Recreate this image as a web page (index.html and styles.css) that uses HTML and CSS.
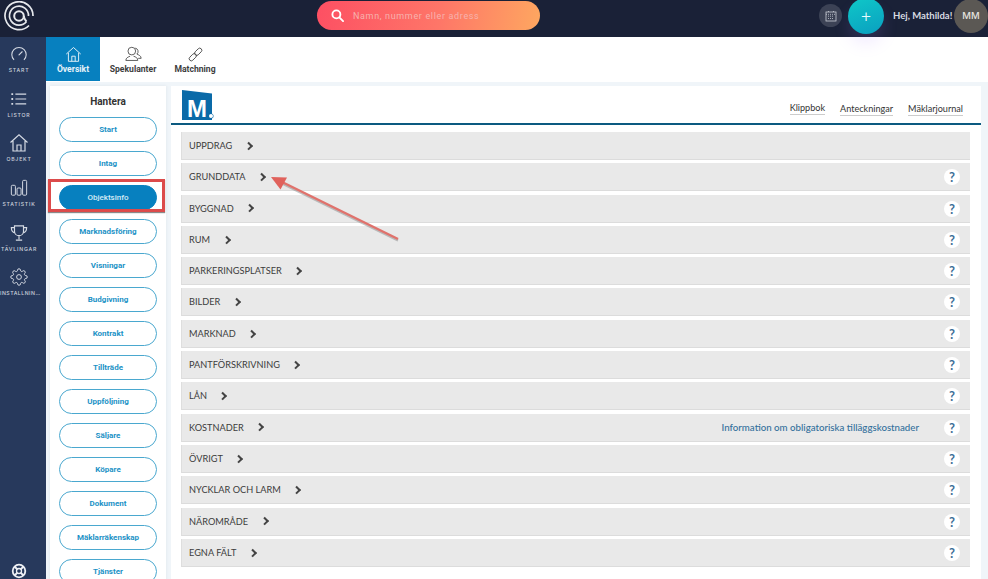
FILE: index.html
```html
<!DOCTYPE html>
<html lang="sv">
<head>
<meta charset="utf-8">
<title>Objekt</title>
<link rel="stylesheet" href="styles.css">
</head>
<body>
<header class="topbar">
  <svg class="logo" viewBox="0 0 30 30" width="30" height="30" fill="none" stroke="#e6e8ec" stroke-width="1.700">
    <path d="M25 24.500A14 14 0 1 1 29 15"/>
    <path d="M22.500 20.500A9.500 9.500 0 1 1 24.500 15"/>
    <circle cx="15" cy="15" r="4.800" stroke-width="2"/>
    <path d="M19.800 15c0 2.500 1 3.500 2.700 5.500" stroke-width="2"/>
  </svg>
  <div class="search">
    <svg class="search-icon" viewBox="0 0 14 14" width="13" height="13" fill="none" stroke="#fff" stroke-width="2"><circle cx="5.800" cy="5.800" r="4.300"/><path d="M9 9l4 4" stroke-linecap="round"/></svg>
    <span class="search-text">Namn, nummer eller adress</span>
  </div>
  <div class="top-right">
    <span class="cal">
      <svg viewBox="0 0 12 12" width="12" height="12" fill="none" stroke="#c8ccd4" stroke-width=".8"><rect x="1" y="2" width="10" height="9"/><path d="M1 4.300h10M3.500 1v2M8.500 1v2M3 6.200h6M3 8.500h6" stroke-dasharray="1 1"/></svg>
    </span>
    <span class="plus">+</span>
    <span class="greet">Hej, Mathilda!</span>
    <span class="avatar">MM</span>
  </div>
</header>

<div class="shell">
  <nav class="side">
    <a class="side-item">
      <svg viewBox="0 0 20 20" width="18" height="18" fill="none" stroke="#d5dae3" stroke-width="1.200"><path d="M4.500 16.500A8 8 0 1 1 15.500 16.500"/><path d="M10 11l3.500-3.500" stroke-linecap="round"/></svg>
      <span>START</span>
    </a>
    <a class="side-item">
      <svg viewBox="0 0 20 20" width="18" height="18" fill="none" stroke="#d5dae3" stroke-width="1.300"><path d="M6 4.500h12M6 10h12M6 15.500h12"/><path d="M1.500 4.500h2M1.500 10h2M1.500 15.500h2" stroke-width="2"/></svg>
      <span>LISTOR</span>
    </a>
    <a class="side-item">
      <svg viewBox="0 0 20 20" width="20" height="20" fill="none" stroke="#d5dae3" stroke-width="1.200"><path d="M1.500 9.500L10 1.800l8.500 7.700M4 8v10h12V8M8 18v-6h4v6"/></svg>
      <span>OBJEKT</span>
    </a>
    <a class="side-item">
      <svg viewBox="0 0 20 20" width="18" height="18" fill="none" stroke="#d5dae3" stroke-width="1.100"><rect x="1.500" y="7" width="4.500" height="11" rx="1.200"/><rect x="7.800" y="10" width="4.500" height="8" rx="1.200"/><rect x="14" y="1.500" width="4.500" height="16.500" rx="1.200"/></svg>
      <span>STATISTIK</span>
    </a>
    <a class="side-item">
      <svg viewBox="0 0 20 20" width="18" height="18" fill="none" stroke="#d5dae3" stroke-width="1.300"><path d="M5 2h10v6a5 5 0 0 1-10 0zM5 4H1.500c0 4 1.500 5.500 4 6M15 4h3.500c0 4-1.500 5.500-4 6M10 13v4M6.500 18h7"/></svg>
      <span>TÄVLINGAR</span>
    </a>
    <a class="side-item">
      <svg viewBox="0 0 24 24" width="18" height="18" fill="none" stroke="#d5dae3" stroke-width="1.300"><circle cx="12" cy="12" r="3.200"/><path d="M19.400 15a1.650 1.650 0 0 0 .33 1.820l.06.06a2 2 0 0 1 0 2.830 2 2 0 0 1-2.830 0l-.06-.06a1.650 1.650 0 0 0-1.820-.33 1.650 1.650 0 0 0-1 1.510V21a2 2 0 0 1-2 2 2 2 0 0 1-2-2v-.09A1.650 1.650 0 0 0 9 19.400a1.650 1.650 0 0 0-1.820.33l-.06.06a2 2 0 0 1-2.830 0 2 2 0 0 1 0-2.830l.06-.06a1.650 1.650 0 0 0 .33-1.820 1.650 1.650 0 0 0-1.510-1H3a2 2 0 0 1-2-2 2 2 0 0 1 2-2h.09A1.650 1.650 0 0 0 4.600 9a1.650 1.650 0 0 0-.33-1.820l-.06-.06a2 2 0 0 1 0-2.830 2 2 0 0 1 2.830 0l.06.06a1.650 1.650 0 0 0 1.820.33H9a1.650 1.650 0 0 0 1-1.510V3a2 2 0 0 1 2-2 2 2 0 0 1 2 2v.09a1.650 1.650 0 0 0 1 1.510 1.650 1.650 0 0 0 1.820-.33l.06-.06a2 2 0 0 1 2.830 0 2 2 0 0 1 0 2.830l-.06.06a1.650 1.650 0 0 0-.33 1.820V9a1.650 1.650 0 0 0 1.510 1H21a2 2 0 0 1 2 2 2 2 0 0 1-2 2h-.09a1.650 1.650 0 0 0-1.510 1z"/></svg>
      <span class="clip">INSTÄLLNINGAR</span>
    </a>
    <svg class="help" viewBox="0 0 16 16" width="16" height="16" fill="none" stroke="#eef0f4"><circle cx="8" cy="8" r="6.300" stroke-width="1.800"/><circle cx="8" cy="8" r="2.500" stroke-width="1.300"/><path d="M3.500 3.500l3 3M12.500 3.500l-3 3M3.500 12.500l3-3M12.500 12.500l-3-3" stroke-width="1.800"/></svg>
  </nav>

  <div class="page">
    <div class="tabs">
      <a class="tab tab-active">
        <svg viewBox="0 0 20 20" width="17" height="17" fill="none" stroke="#fff" stroke-width="1"><path d="M1.500 9.500L10 1.800l8.500 7.700M4 8v10h12V8M8 18v-6h4v6"/></svg>
        <span>Översikt</span>
      </a>
      <a class="tab tab-spek">
        <svg viewBox="0 0 20 20" width="17" height="17" fill="none" stroke="#444" stroke-width="1"><circle cx="8" cy="6" r="4.500"/><path d="M1 17c0-3 2.500-4 5-5M10 12c3 1 5 2 5 5H1M12 2.500a4 4 0 0 1 2 7c2 1 5 2 5 5h-3.500"/></svg>
        <span>Spekulanter</span>
      </a>
      <a class="tab tab-match">
        <svg viewBox="0 0 20 20" width="17" height="17" fill="none" stroke="#444" stroke-width="1"><g transform="rotate(-45 10 10)"><rect x="0.500" y="7.500" width="10" height="5" rx="2.500"/><rect x="9.500" y="7.500" width="10" height="5" rx="2.500"/></g></svg>
        <span>Matchning</span>
      </a>
    </div>

    <div class="content">
      <aside class="manage">
        <h2 class="manage-title">Hantera</h2>
        <a class="pill">Start</a>
        <a class="pill">Intag</a>
        <a class="pill pill-active">Objektsinfo</a>
        <a class="pill">Marknadsföring</a>
        <a class="pill">Visningar</a>
        <a class="pill">Budgivning</a>
        <a class="pill">Kontrakt</a>
        <a class="pill">Tillträde</a>
        <a class="pill">Uppföljning</a>
        <a class="pill">Säljare</a>
        <a class="pill">Köpare</a>
        <a class="pill">Dokument</a>
        <a class="pill">Mäklarräkenskap</a>
        <a class="pill">Tjänster</a>
        <span class="highlight"></span>
      </aside>

      <main class="panel">
        <div class="panel-head">
          <div class="brand"><span class="brand-m">M</span><i class="brand-dot"></i></div>
          <div class="links">
            <a>Klippbok</a><a>Anteckningar</a><a>Mäklarjournal</a>
          </div>
        </div>
        <div class="rows">
          <div class="row"><span>UPPDRAG</span><b class="chev"></b></div>
          <div class="row"><span>GRUNDDATA</span><b class="chev"></b><em class="q">?</em></div>
          <div class="row"><span>BYGGNAD</span><b class="chev"></b><em class="q">?</em></div>
          <div class="row"><span>RUM</span><b class="chev"></b><em class="q">?</em></div>
          <div class="row"><span>PARKERINGSPLATSER</span><b class="chev"></b><em class="q">?</em></div>
          <div class="row"><span>BILDER</span><b class="chev"></b><em class="q">?</em></div>
          <div class="row"><span>MARKNAD</span><b class="chev"></b><em class="q">?</em></div>
          <div class="row"><span>PANTFÖRSKRIVNING</span><b class="chev"></b><em class="q">?</em></div>
          <div class="row"><span>LÅN</span><b class="chev"></b><em class="q">?</em></div>
          <div class="row"><span>KOSTNADER</span><b class="chev"></b><a class="info">Information om obligatoriska tilläggskostnader</a><em class="q">?</em></div>
          <div class="row"><span>ÖVRIGT</span><b class="chev"></b><em class="q">?</em></div>
          <div class="row"><span>NYCKLAR OCH LARM</span><b class="chev"></b><em class="q">?</em></div>
          <div class="row"><span>NÄROMRÅDE</span><b class="chev"></b><em class="q">?</em></div>
          <div class="row"><span>EGNA FÄLT</span><b class="chev"></b><em class="q">?</em></div>
        </div>
      </main>
    </div>
  </div>
</div>

<svg class="arrow" viewBox="0 0 130 70" width="130" height="70" fill="none">
  <path d="M128 63L10 5" stroke="#8a8a8a" stroke-width="2.500" opacity=".5" transform="translate(0 1.500)"/>
  <path d="M128 63L8 4" stroke="#e0726c" stroke-width="2.500"/>
  <path d="M1 1l16 .5-6.500 12z" fill="#e0625c"/>
</svg>
```

FILE: styles.css
```css
* { box-sizing: border-box; }
html, body { margin: 0; height: 100%; overflow: hidden; }
body { width: 988px; height: 579px; background: #f0f5f9; font-family: "Lato", sans-serif; position: relative; }
a { display: block; }

.topbar { height: 37px; background: #1a2137; display: flex; align-items: center; position: relative; z-index: 2; }
.logo { margin-left: 4px; margin-top: -6px; flex: none; }
.search { position: absolute; left: 317px; top: 1px; width: 223px; height: 29px; border-radius: 15px; background: linear-gradient(100deg, #fd4f63 0%, #fe7668 55%, #fea760 100%); display: flex; align-items: center; padding-left: 14px; }
.search-icon { flex: none; }
.search-text { margin-left: 9px; font: 400 9px "Roboto", sans-serif; letter-spacing: .65px; color: #f7b2ae; }
.top-right { position: absolute; left: 819px; top: -3px; width: 169px; height: 37px; display: flex; align-items: center; }
.cal { width: 23px; height: 23px; border-radius: 50%; background: #3c4255; display: flex; align-items: center; justify-content: center; flex: none; }
.plus { width: 36px; height: 36px; border-radius: 50%; background: linear-gradient(160deg, #0fc8c8, #0a9fc0); color: #eafcff; font: 300 17px/36px "Roboto", sans-serif; text-align: center; margin-left: 6px; flex: none; box-shadow: 0 10px 16px rgba(170,130,255,.14); }
.greet { margin-left: 9px; font: 700 9.500px "Lato", sans-serif; color: #d8dbe1; white-space: nowrap; flex: none; width: 58px; }
.avatar { width: 34px; height: 34px; border-radius: 50%; background: #5b5854; color: #e4e2df; font: 500 9.500px/34px "Inter", sans-serif; text-align: center; margin-left: 3px; flex: none; }

.shell { display: flex; height: 542px; }
.side { width: 46px; flex: none; background: #27395c; display: flex; flex-direction: column; padding-top: 7px; position: relative; overflow: hidden; }
.side-item { width: 38px; height: 44.700px; display: flex; flex-direction: column; align-items: center; color: #cdd3dd; font: 500 5.200px "Inter", sans-serif; letter-spacing: .8px; flex: none; }
.side-item svg { flex: none; height: 20px; }
.side-item span { margin-top: 3px; white-space: nowrap; }
.side-item .clip { width: 44px; flex: none; margin-left: 6px; overflow: hidden; text-overflow: ellipsis; letter-spacing: .5px; }
.help { position: absolute; left: 11px; top: 526px; }

.page { flex: 1; display: flex; flex-direction: column; min-width: 0; }
.tabs { height: 45px; background: #fff; display: flex; flex: none; }
.tab { display: flex; flex-direction: column; align-items: center; font: 700 8.600px "Roboto", sans-serif; color: #3d3d3d; padding-top: 9px; height: 44px; }
.tab svg { flex: none; }
.tab span { margin-top: 1px; white-space: nowrap; }
.tab-active { width: 54px; background: #0780bf; color: #e6f3fa; }
.tab-spek { width: 64px; padding-left: 2px; }
.tab-match { margin-left: 6px; width: 50px; }

.content { display: flex; flex: 1; padding: 4px 7px 0 4px; gap: 5px; min-height: 0; overflow: hidden; }
.manage { width: 116px; flex: none; background: #fff; display: flex; flex-direction: column; align-items: center; gap: 9px; position: relative; padding-top: 9px; box-shadow: 0 0 3px #dde4ea; height: 520px; }
.manage-title { margin: 0 0 1px; font: 700 10px/14px "Roboto", sans-serif; color: #333; height: 12px; }
.pill { width: 98px; height: 25px; flex: none; border: 1px solid #4aa8cf; border-radius: 13px; background: #fff; color: #1c92c6; font: 700 8px/23px "Roboto", sans-serif; text-align: center; }
.pill-active { background: #0780bf; border-color: #0780bf; color: #d5ebf6; font-weight: 500; }
.highlight { position: absolute; left: -2px; top: 93px; width: 117px; height: 33px; border: 3px solid #dc4b4b; box-shadow: 0 1px 1px rgba(60,60,60,.6); pointer-events: none; }

.panel { flex: 1; background: #fff; min-width: 0; height: 500px; }
.panel-head { height: 39px; border-bottom: 2px solid #0c5a80; display: flex; justify-content: space-between; padding-left: 11px; position: relative; }
.brand { position: relative; width: 32px; height: 30px; margin-top: 4px; }
.brand-m { display: block; width: 30px; height: 30px; background: #0a6aa8; clip-path: polygon(0 0, 100% 12%, 100% 100%, 0 100%); color: #fff; font: 700 24px/38px "Liberation Sans", sans-serif; text-align: center; }
.brand-dot { position: absolute; left: 27px; top: 24px; width: 4px; height: 4px; border-radius: 50%; background: #fff; box-shadow: 0 0 0 .5px #0a6aa8; }
.links { display: flex; gap: 15px; margin-right: 18px; margin-top: 16px; height: 14px; }
.links a { font: 400 9.100px/13px "Lato", sans-serif; color: #333; border-bottom: 1px solid #ccc; height: 14px; white-space: nowrap; }
.links a:first-child { margin-top: -1px; }
.rows { padding: 7px 11px 0 10px; display: flex; flex-direction: column; gap: 3.300px; }
.row { height: 28px; flex: none; background: #e9e9e9; border-bottom: 1px solid #dcdcdc; border-left: 1px solid #dedede; display: flex; align-items: center; padding-left: 7px; font: 400 9.200px "Lato", sans-serif; color: #3c3c3c; position: relative; }
.chev { width: 5.500px; height: 5.500px; border-top: 2px solid #444; border-right: 2px solid #444; transform: rotate(45deg); margin-left: 13.500px; flex: none; }
.info { position: absolute; right: 51px; top: 7px; font: 500 9.700px/13px "Lato", sans-serif; color: #33709c; white-space: nowrap; }
.q { position: absolute; right: 10px; top: 6px; width: 16px; height: 16px; border-radius: 50%; background: #fff; color: #3f6f97; font: 700 13px/16px "Lato", sans-serif; text-align: center; }

.arrow { position: absolute; left: 270px; top: 176px; pointer-events: none; }
```
